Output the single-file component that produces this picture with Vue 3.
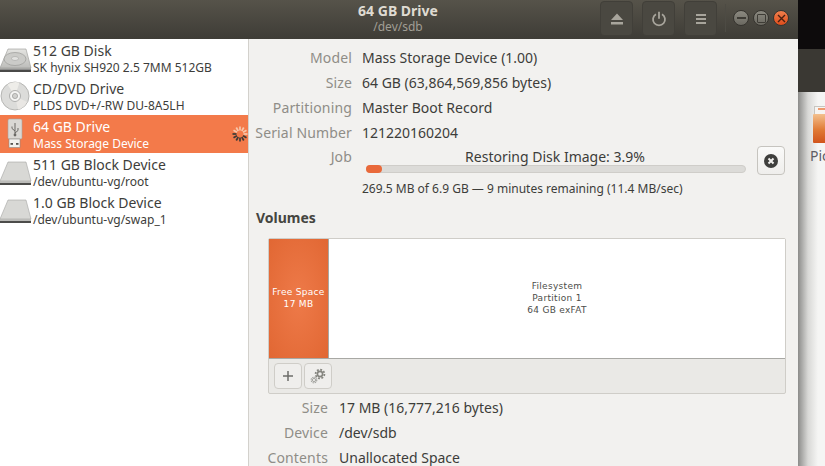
<template>
  <div class="screen">
    <div class="window">
      <header class="titlebar">
        <div class="title">
          <div class="title-main">64 GB Drive</div>
          <div class="title-sub">/dev/sdb</div>
        </div>
        <div class="head-actions">
          <button class="head-btn">
            <svg width="14" height="14" viewBox="0 0 14 14"><path d="M7 1.5 13 8H1z M1 10h12v2.5H1z" fill="#a8a59c" /></svg>
          </button>
          <button class="head-btn">
            <svg width="16" height="16" viewBox="0 0 16 16"><path d="M5 3.2a6 6 0 1 0 6 0" fill="none" stroke="#a8a59c" stroke-width="1.8" /><path d="M8 .8v7" stroke="#a8a59c" stroke-width="1.8" /></svg>
          </button>
          <button class="head-btn">
            <svg width="12" height="12" viewBox="0 0 12 12"><path d="M1 1h10v2H1zM1 5h10v2H1zM1 9h10v2H1z" fill="#a8a59c" /></svg>
          </button>
          <span class="head-sep"></span>
          <div class="win-btns">
            <span class="win-btn"><i class="min"></i></span>
            <span class="win-btn"><i class="max"></i></span>
            <span class="win-btn close">
              <svg width="9" height="9" viewBox="0 0 9 9"><path d="M1 1l7 7M8 1l-7 7" stroke="#4a2010" stroke-width="1.4" /></svg>
            </span>
          </div>
        </div>
      </header>

      <div class="body">
        <aside class="sidebar">
          <div v-for="d in drives" :key="d.name" :class="['drive', { active: d.active }]">
            <svg v-if="d.icon === 'hdd'" class="drive-icon" width="32" height="32" viewBox="0 0 32 32">
              <defs>
                <linearGradient id="caseFill" x1="0" y1="0" x2="0" y2="1">
                  <stop offset="0" stop-color="#e4e4e1" />
                  <stop offset="1" stop-color="#bdbdba" />
                </linearGradient>
              </defs>
              <path d="M8 7h18l5 19H0z" fill="url(#caseFill)" stroke="#989895" stroke-width=".6" />
              <ellipse cx="15" cy="17" rx="11" ry="6.5" fill="#cbcbc8" stroke="#9b9b98" stroke-width=".7" />
              <ellipse cx="15" cy="16.5" rx="3.5" ry="2" fill="#e2e2e0" stroke="#9b9b98" stroke-width=".5" />
              <rect x="0" y="26" width="31" height="1.5" fill="#a8a8a5" />
              <rect x="0" y="27.5" width="31" height="2.5" fill="#4a4a48" />
            </svg>
            <svg v-else-if="d.icon === 'disc'" class="drive-icon" width="32" height="32" viewBox="0 0 32 32">
              <circle cx="15" cy="16" r="14" fill="#dcdcda" stroke="#a9a9a7" stroke-width=".8" />
              <path d="M15 16 7.5 4.5a14 14 0 0 1 12-2z" fill="#eeede9" />
              <path d="M15 16 27 22a14 14 0 0 1-9 7.5z" fill="#e9e7e4" />
              <circle cx="15" cy="16" r="5.5" fill="#f4f4f3" stroke="#a0a09e" stroke-width=".8" />
              <circle cx="15" cy="16" r="2.6" fill="#d0d0ce" stroke="#9a9a98" stroke-width=".7" />
            </svg>
            <svg v-else-if="d.icon === 'usb'" class="drive-icon" width="32" height="32" viewBox="0 0 32 32">
              <rect x="8" y="1" width="14" height="20" rx="1.5" fill="#dad8d4" stroke="#a9a6a0" stroke-width=".6" />
              <rect x="9" y="21" width="11" height="8.5" fill="#f3f2ef" stroke="#8c8a85" stroke-width=".6" />
              <rect x="10.5" y="25" width="2.5" height="1.8" fill="#55534f" />
              <rect x="16" y="25" width="2.5" height="1.8" fill="#55534f" />
              <path d="M15 5v12M15 13l-3-2.5V8.5M15 15l3-2.5V10" fill="none" stroke="#6b6965" stroke-width="1" />
              <circle cx="15" cy="17" r="1.4" fill="#6b6965" />
            </svg>
            <svg v-else class="drive-icon" width="32" height="32" viewBox="0 0 32 32">
              <path d="M8 6h18l5 19H0z" fill="#d8d8d5" stroke="#a5a5a2" stroke-width=".6" />
              <rect x="0" y="25" width="31" height="2" fill="#bcbcb9" />
              <rect x="0" y="27" width="31" height="2" fill="#4c4c4a" />
            </svg>
            <div class="drive-text">
              <div class="drive-name">{{ d.name }}</div>
              <div class="drive-desc">{{ d.desc }}</div>
            </div>
            <svg v-if="d.active" class="spinner" width="16" height="16" viewBox="0 0 16 16">
              <path v-for="(s, i) in spokes" :key="i" d="M8 .5v4" stroke-width="1.7" :stroke="s.color" :transform="s.rotate" />
            </svg>
          </div>
        </aside>

        <main class="content">
          <div class="rows top-rows">
            <div class="row" v-for="r in driveRows" :key="r[0]">
              <span class="label">{{ r[0] }}</span>
              <span class="value">{{ r[1] }}</span>
            </div>
          </div>

          <div class="job">
            <span class="label job-label">Job</span>
            <div class="job-main">
              <div class="job-title">Restoring Disk Image: 3.9%</div>
              <div class="bar"><div class="bar-fill" :style="{ width: progress + '%' }"></div></div>
              <div class="job-detail">269.5 MB of 6.9 GB — 9 minutes remaining (11.4 MB/sec)</div>
            </div>
            <button class="cancel">
              <svg width="16" height="16" viewBox="0 0 16 16">
                <circle cx="8" cy="8" r="7" fill="#3f3f3d" />
                <path d="M5.5 5.5l5 5M10.5 5.5l-5 5" stroke="#f2f1ef" stroke-width="2" />
              </svg>
            </button>
          </div>

          <h3 class="volumes-title">Volumes</h3>

          <div class="volumes">
            <div class="partitions">
              <div class="part free">Free Space<br />17 MB</div>
              <div class="part fs">Filesystem<br />Partition 1<br />64 GB exFAT</div>
            </div>
            <div class="toolbar">
              <button class="tool">
                <svg width="12" height="12" viewBox="0 0 12 12"><path d="M6 1v10M1 6h10" stroke="#6e6e6a" stroke-width="1.5" /></svg>
              </button>
              <button class="tool">
                <svg width="18" height="18" viewBox="0 0 18 18">
                  <circle cx="11" cy="7" r="4.4" fill="none" stroke="#85857f" stroke-width="1.8" stroke-dasharray="1.9 1.5" />
                  <circle cx="11" cy="7" r="2.6" fill="none" stroke="#85857f" stroke-width="1.6" />
                  <circle cx="5" cy="13" r="2.8" fill="none" stroke="#a5a5a1" stroke-width="1.2" stroke-dasharray="1.4 .8" />
                  <circle cx="5" cy="13" r="1.6" fill="none" stroke="#a5a5a1" stroke-width="1" />
                </svg>
              </button>
            </div>
          </div>

          <div class="rows bottom-rows">
            <div class="row" v-for="r in volumeRows" :key="r[0]">
              <span class="label">{{ r[0] }}</span>
              <span class="value">{{ r[1] }}</span>
            </div>
          </div>
        </main>
      </div>
    </div>

    <div class="desktop">
      <div class="desk-black"></div>
      <div class="desk-dark"></div>
      <div class="desk-files">
        <div class="folder">
          <div class="folder-paper"></div>
          <div class="folder-body"></div>
        </div>
        <div class="folder-name">Pictures</div>
      </div>
    </div>
  </div>
</template>

<script setup>
const progress = 4.2

const drives = [
  { name: '512 GB Disk', desc: 'SK hynix SH920 2.5 7MM 512GB', icon: 'hdd' },
  { name: 'CD/DVD Drive', desc: 'PLDS DVD+/-RW DU-8A5LH', icon: 'disc' },
  { name: '64 GB Drive', desc: 'Mass Storage Device', icon: 'usb', active: true },
  { name: '511 GB Block Device', desc: '/dev/ubuntu-vg/root', icon: 'block' },
  { name: '1.0 GB Block Device', desc: '/dev/ubuntu-vg/swap_1', icon: 'block' }
]

const driveRows = [
  ['Model', 'Mass Storage Device (1.00)'],
  ['Size', '64 GB (63,864,569,856 bytes)'],
  ['Partitioning', 'Master Boot Record'],
  ['Serial Number', '121220160204']
]

const volumeRows = [
  ['Size', '17 MB (16,777,216 bytes)'],
  ['Device', '/dev/sdb'],
  ['Contents', 'Unallocated Space']
]

const spokes = Array.from({ length: 12 }, (_, i) => ({
  rotate: `rotate(${i * 30} 8 8)`,
  color: i >= 4 && i <= 9 ? '#3d3a36' : '#f8c6aa'
}))
</script>

<style>
html, body {
  margin: 0;
  overflow: hidden;
}
</style>

<style scoped>
.screen {
  display: flex;
  width: 825px;
  height: 466px;
  overflow: hidden;
  font-family: "Noto Sans", "Open Sans", sans-serif;
  font-size: 14px;
  color: #3d3d3a;
}
.window {
  width: 798px;
  display: flex;
  flex-direction: column;
  flex-shrink: 0;
}
.titlebar {
  height: 39px;
  flex-shrink: 0;
  position: relative;
  display: flex;
  justify-content: flex-end;
  background: linear-gradient(#56534a, #3e3c36);
}
.title {
  position: absolute;
  left: 0;
  right: 2px;
  top: 2px;
  text-align: center;
}
.title-main {
  font-size: 14px;
  line-height: 17px;
  font-weight: 700;
  color: #dfdbd2;
}
.title-sub {
  font-size: 12px;
  line-height: 15px;
  color: #a19e95;
}
.head-actions {
  position: relative;
  display: flex;
  align-items: center;
  gap: 9px;
  padding-right: 9px;
}
.head-btn {
  width: 33px;
  height: 35px;
  margin-top: -2px;
  padding: 0;
  display: flex;
  align-items: center;
  justify-content: center;
  background: #4a4841;
  border: 1px solid #413f39;
  border-radius: 4px;
}
.head-sep {
  width: 1px;
  height: 28px;
  margin: -3px 0 0 -1px;
  background: #4d4b44;
}
.win-btns {
  display: flex;
  gap: 4px;
  margin: -3px 0 0 -2px;
}
.win-btn {
  width: 16px;
  height: 16px;
  box-sizing: border-box;
  border-radius: 50%;
  display: flex;
  align-items: center;
  justify-content: center;
  background: linear-gradient(#8b8980, #6b6961);
  border: 0.5px solid #36342f;
}
.win-btn .min {
  width: 9px;
  height: 1.5px;
  background: #3e3c36;
}
.win-btn .max {
  width: 7px;
  height: 7px;
  border: 1px solid #3e3c36;
  border-radius: 1px;
}
.win-btn.close {
  background: linear-gradient(#f07f4d, #df4d1c);
}
.body {
  flex: 1;
  display: flex;
  min-height: 0;
}
.sidebar {
  width: 249px;
  flex-shrink: 0;
  background: #fff;
  border-right: 1px solid #d3d1cc;
  box-sizing: border-box;
}
.drive {
  position: relative;
  height: 38px;
  display: flex;
  align-items: center;
}
.drive.active {
  background: #f37a4a;
  color: #fff;
}
.drive-icon {
  flex-shrink: 0;
  margin-right: 1px;
}
.drive-name {
  font-size: 14px;
  line-height: 18px;
}
.drive-desc {
  font-size: 12px;
  line-height: 15px;
}
.spinner {
  position: absolute;
  right: 0;
  top: 11px;
}
.content {
  flex: 1;
  min-width: 0;
  background: #f2f1ef;
  overflow: hidden;
  padding-top: 6px;
}
.row {
  height: 25px;
  display: flex;
  align-items: center;
  gap: 10px;
}
.label {
  width: 103px;
  flex-shrink: 0;
  text-align: right;
  letter-spacing: 0.15px;
  color: #8f8d87;
}
.job {
  display: flex;
  align-items: flex-start;
}
.job-label {
  line-height: 24px;
  margin-right: 14px;
}
.job-main {
  width: 380px;
}
.job-title {
  text-align: center;
  line-height: 24px;
  height: 20px;
  padding-right: 2px;
}
.bar {
  height: 6px;
  border: 1px solid #cfcdc9;
  border-radius: 4px;
  background: #dcdbd8;
}
.bar-fill {
  height: 8px;
  margin: -1px 0 0 -1px;
  background: #e9693a;
  border-radius: 4px;
}
.job-detail {
  margin-top: 7px;
  margin-left: -4px;
  font-size: 12px;
  line-height: 18px;
  white-space: nowrap;
}
.cancel {
  width: 28px;
  height: 29px;
  margin: 1px 0 0 11px;
  padding: 0;
  display: flex;
  align-items: center;
  justify-content: center;
  background: linear-gradient(#fafaf9, #efeeec);
  border: 1px solid #c6c4bf;
  border-radius: 4px;
}
.volumes-title {
  margin: 10px 0 0 7px;
  font-size: 14px;
  line-height: 20px;
  font-weight: 700;
  color: #45453f;
}
.volumes {
  width: 518px;
  margin: 10px 0 0 19px;
  box-sizing: border-box;
  border: 1px solid #cfcdc8;
  border-radius: 2px;
  background: #eae9e6;
}
.partitions {
  height: 119px;
  display: flex;
  background: #fff;
  border-bottom: 1px solid #a8a8a4;
  font-size: 9px;
  line-height: 12px;
  text-align: center;
  letter-spacing: 0.3px;
  font-family: "DejaVu Sans", sans-serif;
}
.part {
  display: flex;
  align-items: center;
  justify-content: center;
  padding-bottom: 2px;
  box-sizing: border-box;
}
.free {
  width: 60px;
  flex-shrink: 0;
  color: #fff;
  border-right: 1px solid #a8a8a4;
  background: radial-gradient(ellipse at center, #ee7a49, #e16733);
}
.fs {
  flex: 1;
  color: #4d4d4a;
}
.toolbar {
  height: 34px;
  box-sizing: border-box;
  display: flex;
  align-items: flex-start;
  gap: 2px;
  padding: 4px 0 0 5px;
}
.tool {
  width: 28px;
  height: 26px;
  padding: 0;
  display: flex;
  align-items: center;
  justify-content: center;
  background: #efeeec;
  border: 1px solid #cfcdc8;
  border-radius: 4px;
}
.bottom-rows {
  margin-top: 1px;
  margin-left: -24px;
}
.bottom-rows .row {
  gap: 11px;
}
.desktop {
  flex: 1;
  display: flex;
  flex-direction: column;
  min-width: 0;
  overflow: hidden;
}
.desk-black {
  height: 49px;
  background: #0d0b0c;
}
.desk-dark {
  height: 43px;
  background: #3a3833;
}
.desk-files {
  flex: 1;
  padding: 14px 0 0 15px;
  background: linear-gradient(90deg, #8c8c8a, #d8d8d6 10px, #f5f5f4 20px);
}
.folder {
  width: 30px;
}
.folder-paper {
  height: 8px;
  margin-left: 1px;
  background: #f6f4f1;
  border: 1px solid #c7c5c0;
  border-bottom: 0;
  box-sizing: border-box;
  position: relative;
}
.folder-paper::after {
  content: "";
  position: absolute;
  left: 3px;
  right: 0;
  top: 1px;
  height: 2px;
  background: #ee9a6e;
}
.folder-body {
  height: 29px;
  border-radius: 1px;
  background: linear-gradient(#f3c08d, #e07a35 55%, #d1541c);
}
.folder-name {
  margin-top: 3px;
  margin-left: -3px;
  color: #5e5e66;
  white-space: nowrap;
}
</style>
